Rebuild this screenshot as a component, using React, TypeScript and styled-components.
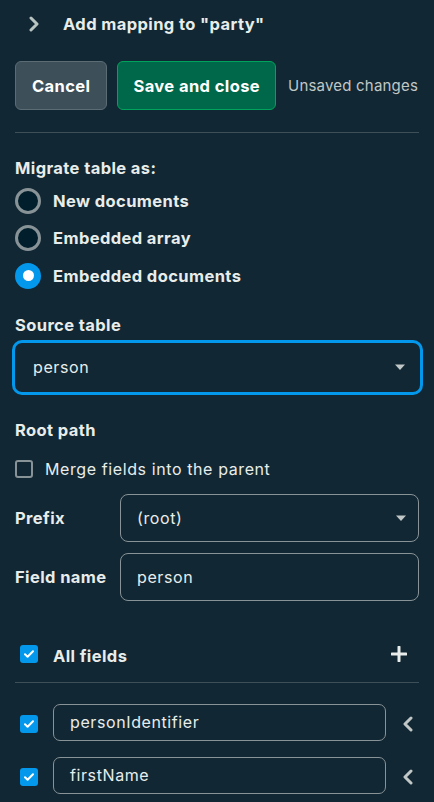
import React from 'react';
import styled, { createGlobalStyle } from 'styled-components';

const GlobalStyle = createGlobalStyle`
  html, body {
    margin: 0;
    padding: 0;
    background: #112733;
  }
  body {
    font-family: Inter, "Noto Sans", sans-serif;
    color: #e8edeb;
    letter-spacing: 0.6px;
  }
`;

const Panel = styled.div`
  width: 434px;
  min-height: 802px;
  box-sizing: border-box;
  padding: 0 15px;
  background: #112733;
  display: flex;
  flex-direction: column;
`;

const Strong = `
  font-size: 16.5px;
  font-weight: 700;
  letter-spacing: 0.4px;
`;

const Header = styled.div`
  height: 48px;
  display: flex;
  align-items: center;
  gap: 23px;
  padding-left: 13px;
  ${Strong}
  color: #e8edeb;
`;

const ButtonRow = styled.div`
  margin-top: 13px;
  display: flex;
  align-items: center;
  gap: 10px;
`;

const Button = styled.button<{ $primary?: boolean }>`
  height: 49px;
  box-sizing: border-box;
  padding: 0 ${p => (p.$primary ? 15 : 16)}px;
  border-radius: 6px;
  font-family: inherit;
  ${Strong}
  color: #fff;
  background: ${p => (p.$primary ? '#00684a' : '#3d4f58')};
  border: 1px solid ${p => (p.$primary ? '#00a35c' : '#5c6c75')};
`;

const Hint = styled.span`
  margin-left: 2px;
  font-size: 15px;
  letter-spacing: 0.2px;
  color: #c1c7c6;
`;

const Divider = styled.hr<{ $top: number }>`
  margin: ${p => p.$top}px 0 0;
  border: none;
  border-top: 1px solid #3d4f58;
`;

const Label = styled.div<{ $top: number }>`
  margin-top: ${p => p.$top}px;
  line-height: 20px;
  ${Strong}
  color: #e8edeb;
`;

const RadioGroup = styled.div`
  margin-top: 4px;
  display: flex;
  flex-direction: column;
`;

const RadioRow = styled.label`
  height: 37.5px;
  display: flex;
  align-items: center;
  gap: 12px;
  ${Strong}
`;

const RadioDot = styled.span<{ $checked?: boolean }>`
  width: 26px;
  height: 26px;
  box-sizing: border-box;
  border-radius: 50%;
  flex: none;
  display: flex;
  align-items: center;
  justify-content: center;
  background: ${p => (p.$checked ? '#0498ec' : '#001e2b')};
  border: 3px solid ${p => (p.$checked ? '#0498ec' : '#889397')};

  &::after {
    content: '';
    display: ${p => (p.$checked ? 'block' : 'none')};
    width: 11px;
    height: 11px;
    border-radius: 50%;
    background: #fff;
  }
`;

const SelectBox = styled.div<{ $focused?: boolean }>`
  box-sizing: border-box;
  display: flex;
  align-items: center;
  justify-content: space-between;
  font-size: 16px;
  color: #e8edeb;
  background: #112733;
  ${p =>
    p.$focused
      ? `
    margin: 5px -4px 0 -3px;
    height: 55px;
    padding: 0 14px 0 18px;
    border: 3px solid #0498ec;
    border-radius: 10px;
  `
      : `
    height: 48px;
    padding: 0 11px 0 16px;
    border: 1px solid #889397;
    border-radius: 8px;
  `}
`;

const Caret = () => (
  <svg width="12" height="8" viewBox="0 0 12 8">
    <path d="M1 1.5h10L6 7z" fill="#c1c7c6" />
  </svg>
);

const CheckRow = styled.label`
  margin-top: 19px;
  height: 20px;
  display: flex;
  align-items: center;
  gap: 12px;
  font-size: 16px;
  color: #e8edeb;
`;

const CheckBox = styled.span<{ $checked?: boolean }>`
  width: 18px;
  height: 18px;
  box-sizing: border-box;
  flex: none;
  border-radius: 3px;
  display: flex;
  align-items: center;
  justify-content: center;
  background: ${p => (p.$checked ? '#0498ec' : 'transparent')};
  border: ${p => (p.$checked ? 'none' : '2px solid #889397')};
`;

const Tick = () => (
  <svg width="12" height="10" viewBox="0 0 12 10">
    <path d="M2 5.2l2.6 2.5L10 2.2" fill="none" stroke="#fff" strokeWidth="2" strokeLinecap="round" strokeLinejoin="round" />
  </svg>
);

const FormGrid = styled.div`
  margin-top: 15px;
  display: grid;
  grid-template-columns: 105px 1fr;
  row-gap: 11px;
  align-items: center;
`;

const FieldLabel = styled.div`
  ${Strong}
  color: #e8edeb;
`;

const TextBox = styled.div<{ $small?: boolean }>`
  box-sizing: border-box;
  height: ${p => (p.$small ? 37 : 48)}px;
  display: flex;
  align-items: center;
  padding: 0 16px;
  border: 1px solid #889397;
  border-radius: ${p => (p.$small ? 7 : 8)}px;
  font-size: 16px;
  color: #e8edeb;
`;

const AllFieldsRow = styled.div`
  margin-top: 39px;
  height: 28px;
  display: flex;
  align-items: center;
  padding: 0 12px 0 5px;
  gap: 15px;
  ${Strong}
  color: #e8edeb;

  & > span:nth-child(2) {
    flex: 1;
    padding-top: 4px;
  }
`;

const FieldList = styled.div`
  margin-top: 21px;
  display: flex;
  flex-direction: column;
  gap: 16px;
`;

const FieldRow = styled.div`
  display: grid;
  grid-template-columns: 38px 1fr 33px;
  align-items: center;

  & > span:first-child {
    margin-left: 5px;
    margin-top: 4px;
  }
`;

const IconCell = styled.div`
  display: flex;
  justify-content: flex-end;
  padding: 4px 4px 0 0;
`;

const ChevronRight = () => (
  <svg width="12" height="16" viewBox="0 0 12 16">
    <path d="M3 2l6 6-6 6" fill="none" stroke="#b8c4c2" strokeWidth="3" strokeLinecap="round" strokeLinejoin="round" />
  </svg>
);

const ChevronLeft = () => (
  <svg width="14" height="16" viewBox="0 0 14 16">
    <path d="M10 2L4 8l6 6" fill="none" stroke="#c1c7c6" strokeWidth="3" strokeLinecap="round" strokeLinejoin="round" />
  </svg>
);

const Plus = () => (
  <svg width="16" height="16" viewBox="0 0 16 16">
    <path d="M8 1v14M1 8h14" stroke="#e8edeb" strokeWidth="3" strokeLinecap="round" />
  </svg>
);

const fields = ['personIdentifier', 'firstName'];

export default function App() {
  return (
    <>
      <GlobalStyle />
      <Panel>
        <Header>
          <ChevronRight />
          <span>Add mapping to "party"</span>
        </Header>

        <ButtonRow>
          <Button>Cancel</Button>
          <Button $primary>Save and close</Button>
          <Hint>Unsaved changes</Hint>
        </ButtonRow>

        <Divider $top={22} />

        <Label $top={25}>Migrate table as:</Label>
        <RadioGroup>
          <RadioRow>
            <RadioDot />
            New documents
          </RadioRow>
          <RadioRow>
            <RadioDot />
            Embedded array
          </RadioRow>
          <RadioRow>
            <RadioDot $checked />
            Embedded documents
          </RadioRow>
        </RadioGroup>

        <Label $top={20}>Source table</Label>
        <SelectBox $focused>
          <span>person</span>
          <Caret />
        </SelectBox>

        <Label $top={25}>Root path</Label>
        <CheckRow>
          <CheckBox />
          Merge fields into the parent
        </CheckRow>

        <FormGrid>
          <FieldLabel>Prefix</FieldLabel>
          <SelectBox>
            <span>(root)</span>
            <Caret />
          </SelectBox>
          <FieldLabel>Field name</FieldLabel>
          <TextBox>person</TextBox>
        </FormGrid>

        <AllFieldsRow>
          <CheckBox $checked>
            <Tick />
          </CheckBox>
          <span>All fields</span>
          <Plus />
        </AllFieldsRow>

        <Divider $top={14} />

        <FieldList>
          {fields.map(f => (
            <FieldRow key={f}>
              <CheckBox $checked>
                <Tick />
              </CheckBox>
              <TextBox $small>{f}</TextBox>
              <IconCell>
                <ChevronLeft />
              </IconCell>
            </FieldRow>
          ))}
        </FieldList>
      </Panel>
    </>
  );
}
